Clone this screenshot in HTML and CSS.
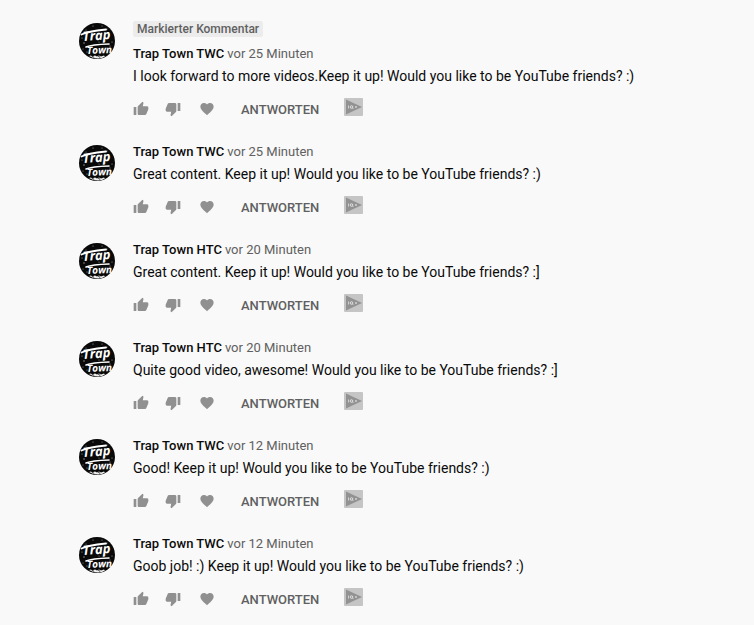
FILE: index.html
```
<!DOCTYPE html>
<html lang="de">
<head>
    <meta charset="UTF-8">
    <meta name="viewport" content="width=device-width, initial-scale=1.0">
    <title>Kommentare</title>
    <link rel="stylesheet" href="styles.css">
</head>
<body>
    <!-- Shared icons -->
    <svg class="sprite" aria-hidden="true">
        <symbol id="like" viewBox="0 0 24 24">
            <path d="M1 21h4V9H1v12zm22-11c0-1.1-.9-2-2-2h-6.31l.95-4.57.03-.32c0-.41-.17-.79-.44-1.06L14.17 1 7.59 7.59C7.22 7.95 7 8.45 7 9v10c0 1.1.9 2 2 2h9c.83 0 1.54-.5 1.84-1.22l3.02-7.05c.09-.23.14-.47.14-.73v-2z"/>
        </symbol>
        <symbol id="dislike" viewBox="0 0 24 24">
            <path d="M15 3H6c-.83 0-1.54.5-1.84 1.22l-3.02 7.05c-.09.23-.14.47-.14.73v2c0 1.1.9 2 2 2h6.31l-.95 4.57-.03.32c0 .41.17.79.44 1.06L9.83 23l6.59-6.59c.36-.36.58-.86.58-1.41V5c0-1.1-.9-2-2-2zm4 0v12h4V3h-4z"/>
        </symbol>
        <symbol id="heart" viewBox="0 0 24 24">
            <path d="M12 21.35l-1.45-1.32C5.4 15.36 2 12.28 2 8.5 2 5.42 4.42 3 7.5 3c1.74 0 3.41.81 4.5 2.09C13.09 3.81 14.76 3 16.5 3 19.58 3 22 5.42 22 8.5c0 3.78-3.4 6.86-8.55 11.54L12 21.35z"/>
        </symbol>
        <symbol id="iq" viewBox="0 0 19 18">
            <rect width="19" height="18" rx="1" fill="#c5c5c5"/>
            <path d="M2 1.500L18 9 2 16.500z" fill="#929292"/>
            <path d="M4.500 7.500v3M11 9h2M12 8v2" stroke="#d0d0d0" fill="none"/>
            <circle cx="7.500" cy="9" r="1.300" stroke="#e0e0e0" fill="none"/>
            <path d="M8 9.500l1.500 1.500" stroke="#d0d0d0"/>
        </symbol>
        <symbol id="logo" viewBox="0 0 36 36">
            <circle cx="18" cy="18" r="18" fill="#090909"/>
            <g fill="#aaa">
                <circle cx="14" cy="3" r=".6"/><circle cx="23" cy="3" r=".5"/>
                <circle cx="28" cy="6" r=".5"/><circle cx="7" cy="7" r=".5"/>
                <circle cx="3" cy="15" r=".6"/><circle cx="5" cy="20" r=".7"/>
                <circle cx="33" cy="19" r=".6"/><circle cx="31" cy="23" r=".5"/>
                <circle cx="4" cy="26" r=".5"/><circle cx="8" cy="29" r=".6"/>
                <circle cx="20" cy="19" r=".5"/><circle cx="26" cy="18" r=".5"/>
            </g>
            <g class="logo-text">
                <text x="4" y="18" transform="rotate(-4 4 18)">Trap</text>
                <text class="small" x="8" y="31" transform="rotate(-2 8 31)">Town</text>
            </g>
            <g fill="none" stroke="#fff" stroke-linecap="round">
                <path d="M2.500 11.500Q8 8.500 27 6.500" stroke-width="1.800"/>
                <path d="M7 24Q13 21.500 30 21" stroke-width="1.600"/>
            </g>
            <path d="M10 33l2-.5 1 1 3-1 2 1 2-1 2 1 3-1 1 1 1-.5Q19 38 10 33z" fill="#eee"/>
            <path d="M13 34l1-1 1 2M19 34l1-1 1 2" stroke="#333" stroke-width=".7" fill="none"/>
        </symbol>
    </svg>

    <main class="comments" id="comments"></main>

    <script>
        const comments = [
            { author: 'Trap Town TWC', time: 'vor 25 Minuten', text: 'I look forward to more videos.Keep it up! Would you like to be YouTube friends? :)', pinned: true },
            { author: 'Trap Town TWC', time: 'vor 25 Minuten', text: 'Great content. Keep it up! Would you like to be YouTube friends? :)' },
            { author: 'Trap Town HTC', time: 'vor 20 Minuten', text: 'Great content. Keep it up! Would you like to be YouTube friends? :]' },
            { author: 'Trap Town HTC', time: 'vor 20 Minuten', text: 'Quite good video, awesome! Would you like to be YouTube friends? :]' },
            { author: 'Trap Town TWC', time: 'vor 12 Minuten', text: 'Good! Keep it up! Would you like to be YouTube friends? :)' },
            { author: 'Trap Town TWC', time: 'vor 12 Minuten', text: 'Goob job! :) Keep it up! Would you like to be YouTube friends? :)' }
        ];

        function icon(name) {
            return `<svg aria-hidden="true"><use href="#${name}"/></svg>`;
        }

        document.getElementById('comments').innerHTML = comments.map(c => `
            <article class="comment">
                <a class="avatar" href="#" aria-label="${c.author}">${icon('logo')}</a>
                <div class="comment-main">
                    ${c.pinned ? '<span class="badge">Markierter Kommentar</span>' : ''}
                    <div class="comment-header">
                        <a class="author" href="#">${c.author}</a>
                        <a class="time" href="#">${c.time}</a>
                    </div>
                    <p class="comment-text">${c.text}</p>
                    <div class="actions">
                        <button class="icon-btn" aria-label="Mag ich">${icon('like')}</button>
                        <button class="icon-btn" aria-label="Mag ich nicht">${icon('dislike')}</button>
                        <button class="icon-btn heart" aria-label="Herz">${icon('heart')}</button>
                        <button class="reply">ANTWORTEN</button>
                        <button class="iq-btn" aria-label="IQ">${icon('iq')}</button>
                    </div>
                </div>
            </article>`).join('');
    </script>
</body>
</html>
```

FILE: styles.css
```
body {
    margin: 0;
    background: #f9f9f9;
    font-family: Roboto, Arial, sans-serif;
    color: #0a0a0a;
}

.sprite {
    display: none;
}

.comments {
    padding: 21px 24px 0 79px;
}

.comment {
    display: flex;
    gap: 18px;
    padding-bottom: 18px;
}

.comment:last-child {
    padding-bottom: 0;
}

.avatar {
    flex: none;
    width: 36px;
    height: 36px;
    margin-top: 2px;
}

.avatar svg {
    display: block;
    width: 36px;
    height: 36px;
}

.logo-text {
    fill: #fff;
    font-family: "Open Sans", sans-serif;
    font-size: 13px;
    font-style: italic;
    font-weight: 700;
}

.logo-text .small {
    font-size: 10px;
}

.comment-main {
    flex: 1;
    min-width: 0;
}

.badge {
    display: block;
    width: fit-content;
    margin-bottom: 8px;
    padding: 0 4px;
    border-radius: 2px;
    background: #ececec;
    color: #606060;
    font-size: 12px;
    font-weight: 500;
    line-height: 16px;
}

.comment-header {
    display: flex;
    gap: 3px;
    font-size: 13px;
    line-height: 18px;
}

.author {
    color: #0a0a0a;
    font-weight: 500;
    text-decoration: none;
}

.time {
    color: #606060;
    text-decoration: none;
}

.comment-text {
    margin: 3px 0 6px;
    font-size: 14px;
    line-height: 20px;
}

.actions {
    display: flex;
    align-items: center;
    height: 33px;
}

.actions button {
    padding: 0;
    border: none;
    background: none;
    font-family: inherit;
    cursor: pointer;
}

.actions svg {
    display: block;
    width: 16px;
    height: 16px;
    fill: #909090;
}

.actions .icon-btn {
    margin-right: 16px;
}

.actions .heart {
    margin: 0 26px 0 2px;
}

.actions .reply {
    padding-top: 2px;
    color: #606060;
    font-size: 13px;
    font-weight: 500;
    line-height: 18px;
}

.actions .iq-btn {
    margin: 0 0 4px 25px;
}

.actions .iq-btn svg {
    width: 19px;
    height: 18px;
}
```
